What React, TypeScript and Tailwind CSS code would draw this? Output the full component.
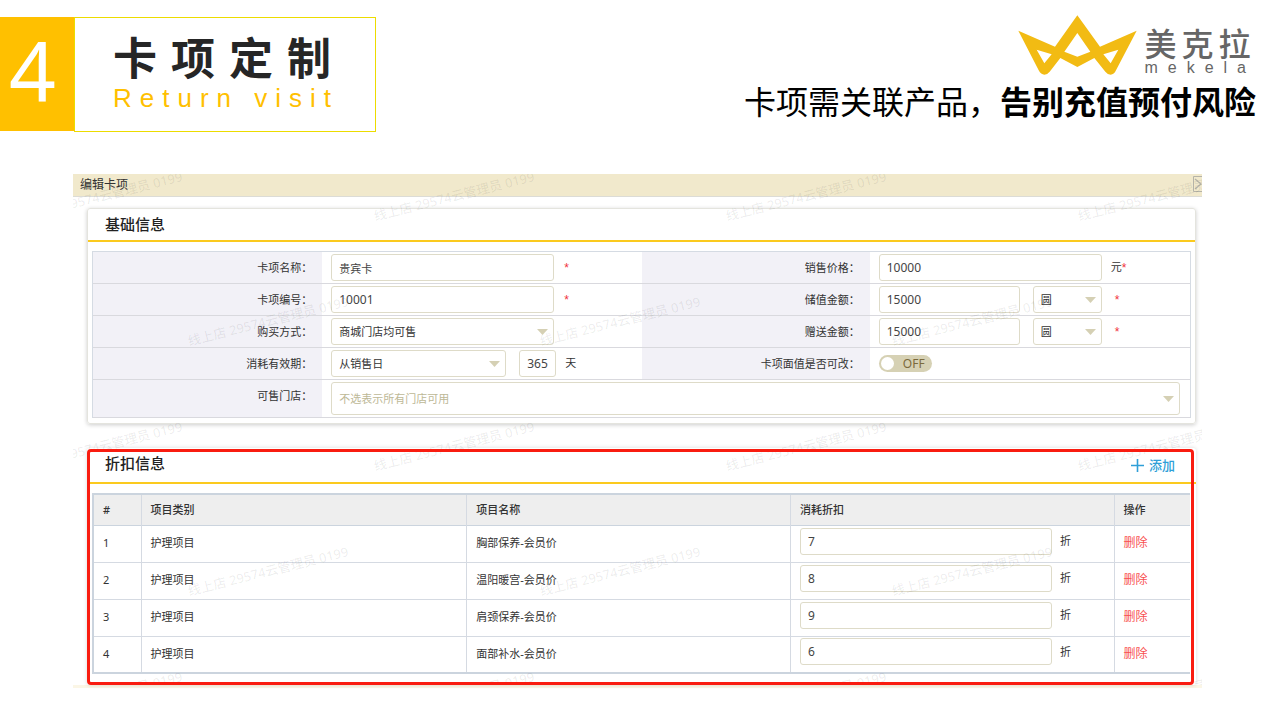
import * as React from "react"
import { clsx } from "clsx"

const WATERMARK = "线上店 29574云管理员 0199"

const discounts = [
  { id: 1, category: "护理项目", name: "胸部保养-会员价", discount: "7" },
  { id: 2, category: "护理项目", name: "温阳暖宫-会员价", discount: "8" },
  { id: 3, category: "护理项目", name: "肩颈保养-会员价", discount: "9" },
  { id: 4, category: "护理项目", name: "面部补水-会员价", discount: "6" },
]

function Logo() {
  return (
    <div className="flex items-start gap-[7px]">
      <svg viewBox="57 43 357 180" className="h-[60px] w-[119px]" aria-hidden="true">
        <path
          fill="#f2bb13"
          fillRule="evenodd"
          d="M58 90 L168 138 L235 44 L303 138 L413 90 L351 209 Q345 222 335 222 Q326 222 319 213 L286 172 L235 199 L184 172 L152 213 Q145 222 136 222 Q126 222 119 209 Z M235 97 L196 153 L235 168 L274 153 Z M113 147 L136 188 L158 161 Z M358 147 L335 188 L313 161 Z"
        />
      </svg>
      <div className="pt-[13px] text-[#666666]">
        <div className="text-[32px] leading-8 font-medium tracking-[5px]">美克拉</div>
        <div className="font-['Liberation_Sans'] text-base leading-4 tracking-[10px]">mekela</div>
      </div>
    </div>
  )
}

function Watermarks() {
  const marks: { x: number; y: number }[] = []
  for (let row = 0; row < 5; row++) {
    const shift = row % 2 === 0 ? 29 : 195
    for (let col = 0; col < 4; col++) {
      marks.push({ x: shift + col * 352, y: 22 + row * 125 })
    }
  }
  return (
    <div className="pointer-events-none absolute inset-0 overflow-hidden" aria-hidden="true">
      {marks.map((m) => (
        <span
          key={`${m.x}-${m.y}`}
          className="absolute -translate-x-1/2 -translate-y-1/2 -rotate-14 text-[13px] leading-4 font-medium whitespace-nowrap text-black/7"
          style={{ left: m.x, top: m.y }}
        >
          {WATERMARK}
        </span>
      ))}
    </div>
  )
}

function TextInput({ className, ...props }: React.ComponentProps<"input">) {
  return (
    <input
      type="text"
      className={clsx("h-[27px] rounded-[3px] border border-[#dedbc8] bg-white px-[7px] text-[#444444] outline-none", className)}
      {...props}
    />
  )
}

function Select({ id, label, className, muted, options }: {
  id: string
  label?: string
  className: string
  muted?: boolean
  options: string[]
}) {
  return (
    <div className={clsx("relative", className)}>
      <select
        id={id}
        aria-label={label}
        className={clsx(
          "h-full w-full appearance-none rounded-[3px] border border-[#dedbc8] bg-white px-[7px] pt-0.5 text-[11px] outline-none",
          muted ? "text-[#bdb896]" : "text-[#333333]"
        )}
      >
        {options.map((o) => (
          <option key={o}>{o}</option>
        ))}
      </select>
      <svg viewBox="0 0 11 6" className="pointer-events-none absolute top-1/2 right-1.5 h-1.5 w-[11px] -translate-y-1/2">
        <path d="M0 0 H11 L5.5 6 Z" fill="#d5d0b4" />
      </svg>
    </div>
  )
}

function Label({ htmlFor, children }: { htmlFor: string; children: React.ReactNode }) {
  return (
    <div className="border-b border-[#d9d9de] bg-[#f2f1f7] pr-2.5 text-right">
      <label htmlFor={htmlFor} className="leading-[31px]">{children}</label>
    </div>
  )
}

function Field({ className, children }: { className?: string; children: React.ReactNode }) {
  return (
    <div className={clsx("flex items-center border-b border-[#d9d9de] py-0.5 pl-[9px]", className)}>
      {children}
    </div>
  )
}

function Required() {
  return <span className="ml-2.5 font-['Liberation_Sans'] text-xs text-[#f0323c]">*</span>
}

export default function App() {
  const [changeable, setChangeable] = React.useState(false)

  return (
    <div className="min-h-screen bg-white font-['Noto_Sans','Noto_Sans_CJK_SC',sans-serif]">
      <header className="flex items-start justify-between pt-[15px] pr-6">
        <div className="mt-0.5 flex">
          <div className="h-[114px] w-[74px] bg-[#ffc000] pl-[9px] text-[82px] leading-[104px] text-white">4</div>
          <div className="h-[115px] w-[302px] border border-[#ecdc00] pt-4 pl-[38px]">
            <h1 className="text-[44px] leading-[48px] font-bold tracking-[14px] text-[#262626]">卡项定制</h1>
            <p className="font-['Liberation_Sans'] text-[26px] leading-8 tracking-[8px] text-[#ffc000]">Return visit</p>
          </div>
        </div>
        <div className="flex flex-col items-end">
          <Logo />
          <h2 className="font-['Noto_Sans_CJK_SC'] text-[32px] leading-[48px] font-normal text-black">
            卡项需关联产品，<strong className="font-bold">告别充值预付风险</strong>
          </h2>
        </div>
      </header>

      <main className="relative mt-[42px] mr-[78px] ml-[73px] border-b-[3px] border-[#fbf6e6] text-[11px] text-[#333333]">
        <div className="flex h-[23px] items-start justify-between overflow-hidden border-b border-[#dcdcd6] bg-[#f1e9cc] pl-[7px]">
          <h2 className="text-xs leading-[22px]">编辑卡项</h2>
          <button aria-label="关闭" className="mt-0.5 h-4 w-[9px] overflow-hidden">
            <svg viewBox="0 0 16 16" className="h-4 w-4" fill="none" stroke="#b5b3a8">
              <path d="M16 0.5 H0.5 V15.5 H16" />
              <path d="M2 3 L8 8 L2 13" strokeWidth="1.4" />
            </svg>
          </button>
        </div>

        <section className="mt-[11px] mr-1.5 ml-3.5 rounded-[3px] border border-[#e4e4de] pb-[5px] shadow-[0_1px_4px_rgba(0,0,0,0.2)]">
          <h3 className="border-b-2 border-[#fbca1e] pl-[17px] text-[15px] leading-[31px] font-medium text-[#222222]">基础信息</h3>
          <form className="mx-1 mt-[9px] grid grid-cols-[229fr_319fr_228fr_320fr] border border-b-0 border-[#d5dbe3]">
            <Label htmlFor="cardName">卡项名称：</Label>
            <Field>
              <TextInput id="cardName" defaultValue="贵宾卡" className="w-[223px] text-[11px]" />
              <Required />
            </Field>
            <Label htmlFor="price">销售价格：</Label>
            <Field>
              <TextInput id="price" defaultValue="10000" className="w-[223px] text-xs" />
              <span className="ml-[9px]">元</span>
              <span className="font-['Liberation_Sans'] text-xs text-[#f0323c]">*</span>
            </Field>

            <Label htmlFor="cardNo">卡项编号：</Label>
            <Field>
              <TextInput id="cardNo" defaultValue="10001" className="w-[223px] text-xs" />
              <Required />
            </Field>
            <Label htmlFor="stored">储值金额：</Label>
            <Field>
              <TextInput id="stored" defaultValue="15000" className="w-[141px] text-xs" />
              <Select id="storedUnit" label="储值单位" className="mr-[3px] ml-[13px] h-[27px] w-[69px]" options={["圆"]} />
              <Required />
            </Field>

            <Label htmlFor="buyWay">购买方式：</Label>
            <Field>
              <Select id="buyWay" className="h-[27px] w-[223px]" options={["商城门店均可售"]} />
            </Field>
            <Label htmlFor="gift">赠送金额：</Label>
            <Field>
              <TextInput id="gift" defaultValue="15000" className="w-[141px] text-xs" />
              <Select id="giftUnit" label="赠送单位" className="mr-[3px] ml-[13px] h-[27px] w-[69px]" options={["圆"]} />
              <Required />
            </Field>

            <Label htmlFor="validFrom">消耗有效期：</Label>
            <Field>
              <Select id="validFrom" className="h-[27px] w-[175px]" options={["从销售日"]} />
              <TextInput aria-label="天数" defaultValue="365" className="ml-[13px] w-[37px] text-xs" />
              <span className="ml-[9px]">天</span>
            </Field>
            <Label htmlFor="changeable">卡项面值是否可改：</Label>
            <Field>
              <label className={clsx("flex h-[17px] w-[53px] items-center justify-between rounded-full px-0.5", changeable ? "flex-row-reverse bg-[#fbca1e]" : "bg-[#d6d1b4]")}>
                <input
                  id="changeable"
                  type="checkbox"
                  checked={changeable}
                  onChange={(e) => setChangeable(e.target.checked)}
                  className="size-[13px] appearance-none rounded-full bg-white"
                />
                <span className="px-[5px] text-xs leading-4 text-[#7b6a3c]">{changeable ? "ON" : "OFF"}</span>
              </label>
            </Field>

            <Label htmlFor="shops">可售门店：</Label>
            <Field className="col-span-3 pr-2.5">
              <Select id="shops" className="h-[33px] w-full" muted options={["不选表示所有门店可用"]} />
            </Field>
          </form>
        </section>

        <section className="mt-6 mr-1.5 ml-3.5 h-[237px] rounded-[3px] bg-white pt-px shadow-[0_0_4px_rgba(0,0,0,0.15)]">
          <div className="flex h-[35px] items-center justify-between border-b-2 border-[#fbca1e] pr-[21px] pl-[18px]">
            <h3 className="pb-1 text-[15px] font-medium text-[#222222]">折扣信息</h3>
            <button className="flex items-center gap-[5px] text-[13px] font-medium text-[#2f9fd8]">
              <svg viewBox="0 0 13 13" className="size-[13px]" stroke="currentColor" strokeWidth="1.6">
                <path d="M6.5 0 V13 M0 6.5 H13" />
              </svg>
              添加
            </button>
          </div>
          <div className="mt-[9px] mr-1.5 ml-[5px]">
            <table className="w-full table-fixed border-collapse border-2 border-r-0 border-[#cbd4de] text-left">
              <thead className="bg-[#eeeeee]">
                <tr className="h-[31px] border-b border-[#cbd4de]">
                  <th className="w-12 border-r border-[#d5dae2] px-[9px] font-medium">#</th>
                  <th className="w-[29.7%] border-r border-[#d5dae2] px-[9px] font-medium">项目类别</th>
                  <th className="border-r border-[#d5dae2] px-[9px] font-medium">项目名称</th>
                  <th className="border-r border-[#d5dae2] px-[9px] font-medium">消耗折扣</th>
                  <th className="w-[76px] px-[9px] font-medium">操作</th>
                </tr>
              </thead>
              <tbody>
                {discounts.map((row) => (
                  <tr key={row.id} className="h-[37px] border-b border-[#d5dae2]">
                    <td className="border-r border-[#d5dae2] px-[9px]">{row.id}</td>
                    <td className="border-r border-[#d5dae2] px-[9px]">{row.category}</td>
                    <td className="border-r border-[#d5dae2] px-[9px]">{row.name}</td>
                    <td className="border-r border-[#d5dae2] px-[9px] pb-[5px]">
                      <div className="flex items-center gap-2">
                        <TextInput id={`discount${row.id}`} defaultValue={row.discount} className="w-[252px] text-xs" />
                        <label htmlFor={`discount${row.id}`}>折</label>
                      </div>
                    </td>
                    <td className="px-[9px]">
                      <button className="text-xs text-[#f8504f]">删除</button>
                    </td>
                  </tr>
                ))}
              </tbody>
            </table>
          </div>
        </section>

        <Watermarks />
        {/* highlight frame around the discount section */}
        <div className="pointer-events-none absolute right-2 bottom-0 left-3.5 h-[236px] rounded-[4px] border-[3px] border-[#f91c10]" />
      </main>
    </div>
  )
}
